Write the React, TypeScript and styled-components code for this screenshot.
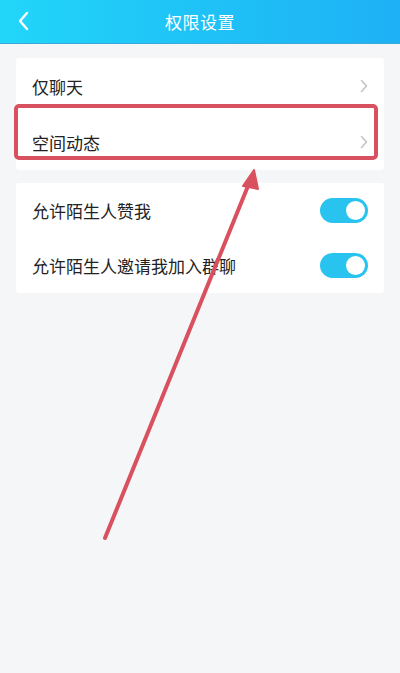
import React from 'react';
import styled, { createGlobalStyle } from 'styled-components';

const GlobalStyle = createGlobalStyle`
  html, body {
    margin: 0;
    padding: 0;
    background: #f5f6f8;
    font-family: "Noto Sans CJK SC", "Liberation Sans", sans-serif;
  }
`;

const Page = styled.div`
  position: relative;
  width: 400px;
  height: 673px;
  background: #f5f6f8;
  overflow: hidden;
`;

const Header = styled.div`
  height: 44px;
  background: linear-gradient(90deg, #22d6f9 0%, #1fc4f7 45%, #1eb1f5 100%);
  border-bottom: 1px solid #3aa9d6;
  box-sizing: border-box;
  display: flex;
  align-items: center;
  justify-content: center;
  position: relative;
`;

const BackButton = styled.div`
  position: absolute;
  left: 14px;
  top: 10px;
  width: 18px;
  height: 22px;
  display: flex;
  align-items: center;
  justify-content: center;
`;

const Title = styled.h1`
  margin: 0;
  color: #ffffff;
  font-size: 17px;
  font-weight: 400;
  letter-spacing: 0.5px;
`;

const Card = styled.div<{ $top: number }>`
  margin: ${p => p.$top}px 16px 0;
  background: #ffffff;
  border-radius: 3px;
`;

const Row = styled.div<{ $h: number }>`
  height: ${p => p.$h}px;
  display: flex;
  align-items: center;
  justify-content: space-between;
  padding: 0 16px;
`;

const Label = styled.span`
  font-size: 17px;
  color: #222222;
`;

const Toggle = styled.div`
  width: 48px;
  height: 25px;
  border-radius: 13px;
  background: #28c3ef;
  position: relative;
`;

const Knob = styled.div`
  position: absolute;
  right: 3px;
  top: 3px;
  width: 19px;
  height: 19px;
  border-radius: 50%;
  background: #ffffff;
`;

const Overlay = styled.svg`
  position: absolute;
  left: 0;
  top: 0;
  pointer-events: none;
`;

const Chevron = () => (
  <svg width="8" height="14" viewBox="0 0 8 14">
    <path d="M1.5 1.5 L6.5 7 L1.5 12.5" fill="none" stroke="#c4c4c8" strokeWidth="1.6" strokeLinecap="round" strokeLinejoin="round" />
  </svg>
);

const App: React.FC = () => {
  return (
    <Page>
      <GlobalStyle />
      <Header>
        <BackButton>
          <svg width="12" height="20" viewBox="0 0 12 20">
            <path d="M10 2 L3 10 L10 18" fill="none" stroke="#ffffff" strokeWidth="2.4" strokeLinecap="round" strokeLinejoin="round" />
          </svg>
        </BackButton>
        <Title>权限设置</Title>
      </Header>

      <Card $top={14}>
        <Row $h={56}>
          <Label>仅聊天</Label>
          <Chevron />
        </Row>
        <Row $h={56}>
          <Label>空间动态</Label>
          <Chevron />
        </Row>
      </Card>

      <Card $top={13}>
        <Row $h={55}>
          <Label>允许陌生人赞我</Label>
          <Toggle><Knob /></Toggle>
        </Row>
        <Row $h={55}>
          <Label>允许陌生人邀请我加入群聊</Label>
          <Toggle><Knob /></Toggle>
        </Row>
      </Card>

      {/* annotation overlay */}
      <Overlay width="400" height="673" viewBox="0 0 400 673">
        <rect x="16" y="106" width="360" height="52" rx="3" fill="none" stroke="#d9515f" strokeWidth="4" />
        <line x1="105" y1="538" x2="248" y2="186" stroke="#d9515f" strokeWidth="4" strokeLinecap="round" />
        <polygon points="254,170 243,186 258,189" fill="#d9515f" stroke="#d9515f" strokeWidth="2" strokeLinejoin="round" />
      </Overlay>
    </Page>
  );
};

export default App;
